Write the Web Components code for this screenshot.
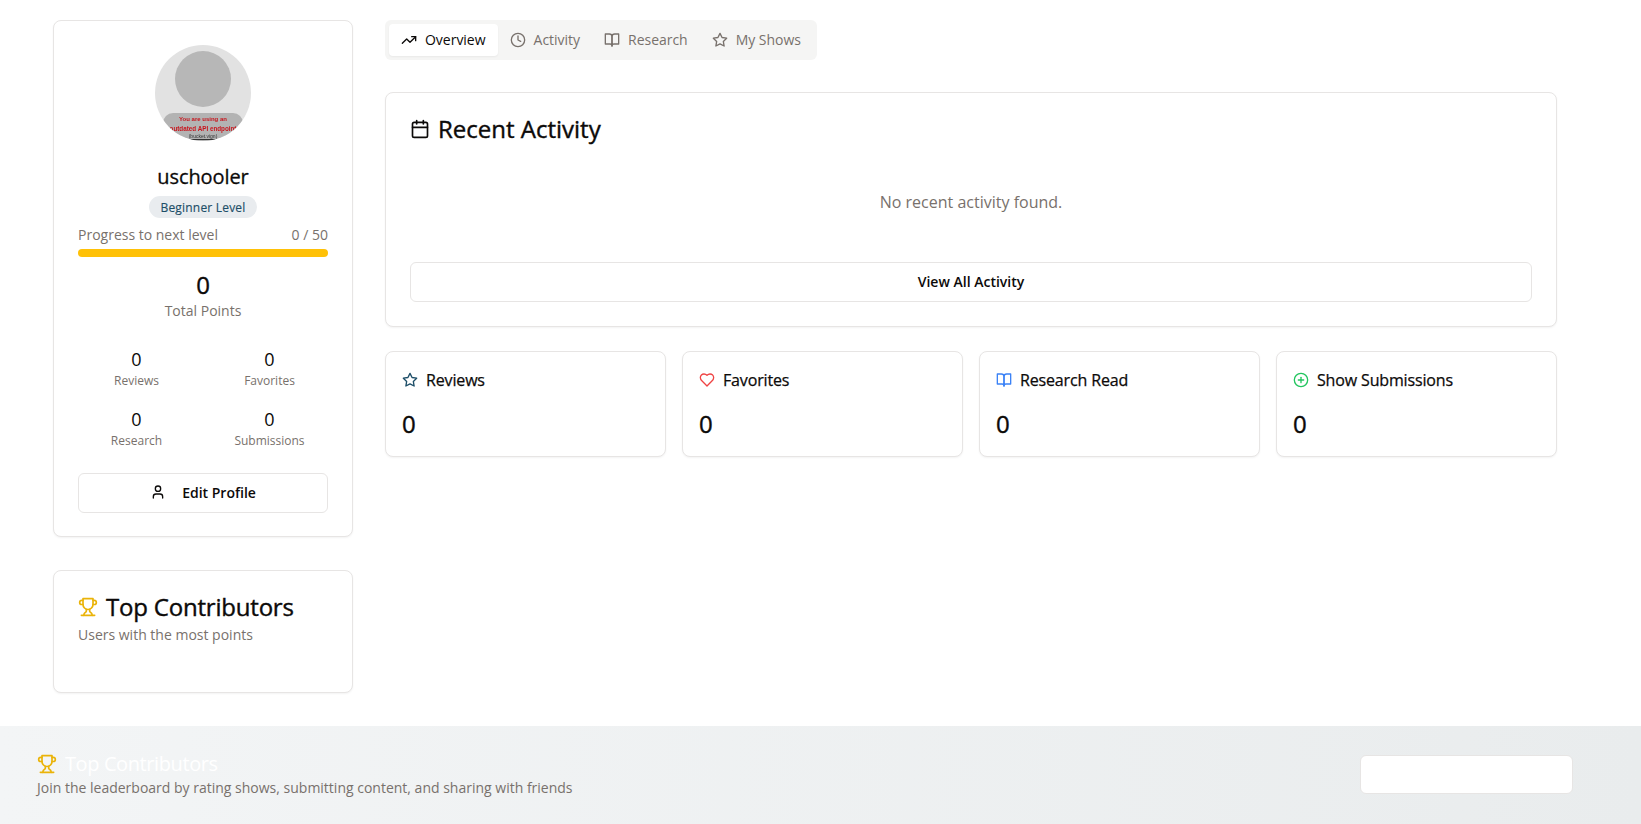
<!DOCTYPE html>
<html lang="en">
<head>
<meta charset="utf-8">
<title>Profile</title>
<style>
  html, body { margin: 0; padding: 0; background: #fff; }
  body { font-family: "Open Sans", "Noto Sans", sans-serif; color: #0c0a09; }
</style>
</head>
<body>
<profile-page></profile-page>

<script>
const ICONS = {
  trending: '<polyline points="22 7 13.5 15.5 8.5 10.5 2 17"/><polyline points="16 7 22 7 22 13"/>',
  clock: '<circle cx="12" cy="12" r="10"/><polyline points="12 6 12 12 16 14"/>',
  book: '<path d="M2 3h6a4 4 0 0 1 4 4v14a3 3 0 0 0-3-3H2z"/><path d="M22 3h-6a4 4 0 0 0-4 4v14a3 3 0 0 1 3-3h7z"/>',
  star: '<polygon points="12 2 15.09 8.26 22 9.27 17 14.14 18.18 21.02 12 17.77 5.82 21.02 7 14.14 2 9.27 8.91 8.26 12 2"/>',
  calendar: '<path d="M8 2v4"/><path d="M16 2v4"/><rect width="18" height="18" x="3" y="4" rx="2"/><path d="M3 10h18"/>',
  heart: '<path d="M19 14c1.49-1.46 3-3.21 3-5.5A5.5 5.5 0 0 0 16.5 3c-1.76 0-3 .5-4.5 2-1.5-1.5-2.74-2-4.5-2A5.5 5.5 0 0 0 2 8.5c0 2.3 1.5 4.05 3 5.5l7 7Z"/>',
  plus: '<circle cx="12" cy="12" r="10"/><path d="M8 12h8"/><path d="M12 8v8"/>',
  trophy: '<path d="M6 9H4.5a2.5 2.5 0 0 1 0-5H6"/><path d="M18 9h1.5a2.5 2.5 0 0 0 0-5H18"/><path d="M4 22h16"/><path d="M10 14.66V17c0 .55-.47.98-.97 1.21C7.85 18.75 7 20.24 7 22"/><path d="M14 14.66V17c0 .55.47.98.97 1.21C16.15 18.75 17 20.24 17 22"/><path d="M18 2H6v7a6 6 0 0 0 12 0V2Z"/>',
  user: '<path d="M19 21v-2a4 4 0 0 0-4-4H9a4 4 0 0 0-4 4v2"/><circle cx="12" cy="7" r="4"/>'
};

class AppIcon extends HTMLElement {
  connectedCallback() {
    const size = this.getAttribute('size') || 16;
    this.attachShadow({ mode: 'open' });
    this.shadowRoot.innerHTML = `
      <style>
        :host { display: inline-flex; flex: none; color: inherit; -webkit-text-stroke: 0; }
        svg { display: block; }
      </style>
      <svg width="${size}" height="${size}" viewBox="0 0 24 24" fill="none" stroke="currentColor"
        stroke-width="2" stroke-linecap="round" stroke-linejoin="round">${ICONS[this.getAttribute('name')]}</svg>
    `;
  }
}
customElements.define('app-icon', AppIcon);

class AppCard extends HTMLElement {
  connectedCallback() {
    this.attachShadow({ mode: 'open' });
    this.shadowRoot.innerHTML = `
      <style>
        :host {
          display: block;
          box-sizing: border-box;
          background: #fff;
          border: 1px solid #e7e5e4;
          border-radius: 8px;
          box-shadow: 0 1px 2px rgba(0, 0, 0, 0.05);
        }
      </style>
      <slot></slot>
    `;
  }
}
customElements.define('app-card', AppCard);

class OutlineButton extends HTMLElement {
  connectedCallback() {
    this.attachShadow({ mode: 'open' });
    this.shadowRoot.innerHTML = `
      <style>
        :host {
          display: flex;
          align-items: center;
          justify-content: center;
          box-sizing: border-box;
          height: 40px;
          padding-bottom: 2px;
          background: #fff;
          border: 1px solid #e7e5e4;
          border-radius: 6px;
          font-size: 14px;
          font-weight: 600;
          color: #0c0a09;
        }
      </style>
      <slot></slot>
    `;
  }
}
customElements.define('outline-button', OutlineButton);

class UserAvatar extends HTMLElement {
  connectedCallback() {
    this.attachShadow({ mode: 'open' });
    this.shadowRoot.innerHTML = `
      <style>
        :host {
          display: block;
          position: relative;
          width: 96px;
          height: 96px;
          border-radius: 50%;
          overflow: hidden;
          background: #e2e2e2;
        }
        .head {
          position: absolute;
          left: 20px;
          top: 6px;
          width: 56px;
          height: 56px;
          border-radius: 50%;
          background: #b7b7b7;
        }
        .plate {
          position: absolute;
          left: 8px;
          top: 68px;
          width: 80px;
          height: 40px;
          border-radius: 10px;
          background: #b3b3b3;
          font-family: "Liberation Sans", sans-serif;
          text-align: center;
          white-space: nowrap;
          overflow: hidden;
        }
        .warn {
          margin-top: 2px;
          font-size: 6px;
          line-height: 9px;
          font-weight: 700;
          color: #c8141c;
          filter: blur(0.25px);
        }
        .warn.long { margin-top: 0; font-size: 6.3px; }
        .src {
          font-size: 5px;
          line-height: 7px;
          color: #333;
          text-decoration: underline;
          filter: blur(0.25px);
        }
      </style>
      <div class="head"></div>
      <div class="plate">
        <div class="warn">You are using an</div>
        <div class="warn long">outdated API endpoint</div>
        <div class="src">(bucket.vign)</div>
      </div>
    `;
  }
}
customElements.define('user-avatar', UserAvatar);

class MiniStat extends HTMLElement {
  connectedCallback() {
    this.attachShadow({ mode: 'open' });
    this.shadowRoot.innerHTML = `
      <style>
        :host { display: block; text-align: center; }
        .num { font-size: 18px; line-height: 28px; }
        .lab { font-size: 12px; line-height: 16px; color: #78716c; }
      </style>
      <div class="num">${this.getAttribute('value')}</div>
      <div class="lab">${this.getAttribute('label')}</div>
    `;
  }
}
customElements.define('mini-stat', MiniStat);

class ProfileCard extends HTMLElement {
  connectedCallback() {
    this.attachShadow({ mode: 'open' });
    this.shadowRoot.innerHTML = `
      <style>
        :host { display: block; }
        app-card { height: 517px; padding: 24px; }
        .top { display: flex; flex-direction: column; align-items: center; }
        h2 {
          margin: 22px 0 0;
          font-size: 20px;
          line-height: 28px;
          font-weight: 400;
          letter-spacing: -0.1px;
          -webkit-text-stroke: 0.3px currentColor;
        }
        .badge {
          margin-top: 5px;
          height: 22px;
          box-sizing: border-box;
          padding: 0 11px;
          display: flex;
          align-items: center;
          border-radius: 11px;
          background: #e9ecef;
          font-size: 12px;
          letter-spacing: 0.2px;
          color: #1d4e68;
          -webkit-text-stroke: 0.15px currentColor;
        }
        .progress {
          display: flex;
          justify-content: space-between;
          margin-top: 7px;
          font-size: 14px;
          line-height: 20px;
          color: #78716c;
        }
        .bar { height: 8px; margin-top: 4px; border-radius: 4px; background: #ffc107; }
        .total { margin-top: 12px; text-align: center; }
        .total b {
          display: block;
          font-size: 24px;
          line-height: 32px;
          font-weight: 400;
          -webkit-text-stroke: 0.4px currentColor;
        }
        .total span { display: block; font-size: 14px; line-height: 20px; color: #78716c; }
        .grid {
          display: grid;
          grid-template-columns: 1fr 1fr;
          gap: 16px;
          margin-top: 24px;
        }
        outline-button { margin-top: 24px; gap: 16px; }
      </style>
      <app-card>
        <div class="top">
          <user-avatar></user-avatar>
          <h2>uschooler</h2>
          <div class="badge">Beginner Level</div>
        </div>
        <div class="progress"><span>Progress to next level</span><span>0 / 50</span></div>
        <div class="bar"></div>
        <div class="total"><b>0</b><span>Total Points</span></div>
        <div class="grid">
          <mini-stat value="0" label="Reviews"></mini-stat>
          <mini-stat value="0" label="Favorites"></mini-stat>
          <mini-stat value="0" label="Research"></mini-stat>
          <mini-stat value="0" label="Submissions"></mini-stat>
        </div>
        <outline-button><app-icon name="user"></app-icon>Edit Profile</outline-button>
      </app-card>
    `;
  }
}
customElements.define('profile-card', ProfileCard);

class ContributorsCard extends HTMLElement {
  connectedCallback() {
    this.attachShadow({ mode: 'open' });
    this.shadowRoot.innerHTML = `
      <style>
        :host { display: block; }
        app-card { height: 123px; padding: 24px; }
        h2 {
          display: flex;
          align-items: center;
          gap: 8px;
          margin: 0;
          font-size: 24px;
          line-height: 24px;
          font-weight: 400;
          letter-spacing: -0.2px;
          -webkit-text-stroke: 0.4px currentColor;
        }
        app-icon { color: #eab308; }
        p { margin: 6px 0 0; font-size: 14px; line-height: 20px; color: #78716c; }
      </style>
      <app-card>
        <h2><app-icon name="trophy" size="20"></app-icon>Top Contributors</h2>
        <p>Users with the most points</p>
      </app-card>
    `;
  }
}
customElements.define('contributors-card', ContributorsCard);

class TabBar extends HTMLElement {
  connectedCallback() {
    this.attachShadow({ mode: 'open' });
    const tabs = [['trending', 'Overview'], ['clock', 'Activity'], ['book', 'Research'], ['star', 'My Shows']];
    this.shadowRoot.innerHTML = `
      <style>
        :host {
          display: inline-flex;
          box-sizing: border-box;
          height: 40px;
          padding: 4px;
          background: #f5f5f4;
          border-radius: 6px;
          font-size: 14px;
          letter-spacing: -0.02px;
          color: #78716c;
        }
        .tab {
          display: flex;
          align-items: center;
          gap: 8px;
          padding: 0 12px 1px;
          border-radius: 4px;
        }
        .tab.on {
          background: #fff;
          color: #0c0a09;
          box-shadow: 0 1px 2px rgba(0, 0, 0, 0.05);
        }
      </style>
      ${tabs.map((t, i) => `
        <div class="tab ${i === 0 ? 'on' : ''}"><app-icon name="${t[0]}"></app-icon>${t[1]}</div>
      `).join('')}
    `;
  }
}
customElements.define('tab-bar', TabBar);

class RecentActivity extends HTMLElement {
  connectedCallback() {
    this.attachShadow({ mode: 'open' });
    this.shadowRoot.innerHTML = `
      <style>
        :host { display: block; }
        app-card { height: 235px; padding: 24px; }
        h2 {
          display: flex;
          align-items: center;
          gap: 8px;
          margin: 0;
          font-size: 24px;
          line-height: 24px;
          font-weight: 400;
          -webkit-text-stroke: 0.4px currentColor;
        }
        p {
          margin: 0;
          height: 121px;
          padding-top: 49px;
          box-sizing: border-box;
          text-align: center;
          font-size: 16px;
          line-height: 24px;
          color: #78716c;
        }
      </style>
      <app-card>
        <h2><app-icon name="calendar" size="20"></app-icon>Recent Activity</h2>
        <p>No recent activity found.</p>
        <outline-button>View All Activity</outline-button>
      </app-card>
    `;
  }
}
customElements.define('recent-activity', RecentActivity);

class StatTile extends HTMLElement {
  connectedCallback() {
    this.attachShadow({ mode: 'open' });
    this.shadowRoot.innerHTML = `
      <style>
        :host { display: block; }
        app-card { height: 106px; padding: 16px; }
        .head {
          display: flex;
          align-items: center;
          gap: 8px;
          height: 24px;
          font-size: 16px;
          letter-spacing: -0.15px;
          -webkit-text-stroke: 0.25px currentColor;
        }
        app-icon { color: ${this.getAttribute('color')}; }
        .val {
          margin-top: 16px;
          font-size: 24px;
          line-height: 32px;
          -webkit-text-stroke: 0.4px currentColor;
        }
      </style>
      <app-card>
        <div class="head"><app-icon name="${this.getAttribute('icon')}"></app-icon>${this.getAttribute('label')}</div>
        <div class="val">${this.getAttribute('value')}</div>
      </app-card>
    `;
  }
}
customElements.define('stat-tile', StatTile);

class LeaderboardBanner extends HTMLElement {
  connectedCallback() {
    this.attachShadow({ mode: 'open' });
    this.shadowRoot.innerHTML = `
      <style>
        :host {
          display: flex;
          align-items: center;
          justify-content: space-between;
          box-sizing: border-box;
          height: 98px;
          padding: 0 68px 2px 37px;
          background: linear-gradient(90deg, #f3f5f6, #e9eced);
        }
        h3 {
          display: flex;
          align-items: center;
          gap: 8px;
          margin: 0;
          font-size: 20px;
          line-height: 28px;
          font-weight: 400;
          letter-spacing: -0.4px;
          color: #fff;
        }
        app-icon { color: #eab308; }
        p { margin: 0; font-size: 14px; line-height: 20px; color: #78716c; }
        .blank {
          width: 213px;
          height: 39px;
          box-sizing: border-box;
          background: #fff;
          border: 1px solid #e7e5e4;
          border-radius: 6px;
        }
      </style>
      <div>
        <h3><app-icon name="trophy" size="20"></app-icon>Top Contributors</h3>
        <p>Join the leaderboard by rating shows, submitting content, and sharing with friends</p>
      </div>
      <div class="blank"></div>
    `;
  }
}
customElements.define('leaderboard-banner', LeaderboardBanner);

class ProfilePage extends HTMLElement {
  connectedCallback() {
    this.attachShadow({ mode: 'open' });
    this.shadowRoot.innerHTML = `
      <style>
        :host { display: block; }
        main {
          display: grid;
          grid-template-columns: 300px 1172px;
          column-gap: 32px;
          height: 726px;
          box-sizing: border-box;
          padding: 20px 0 0 53px;
        }
        aside { display: flex; flex-direction: column; gap: 33px; }
        .col { display: flex; flex-direction: column; align-items: stretch; }
        tab-bar { align-self: flex-start; }
        recent-activity { margin-top: 32px; }
        .tiles {
          display: grid;
          grid-template-columns: repeat(4, 1fr);
          gap: 16px;
          margin-top: 24px;
        }
      </style>
      <main>
        <aside>
          <profile-card></profile-card>
          <contributors-card></contributors-card>
        </aside>
        <div class="col">
          <tab-bar></tab-bar>
          <recent-activity></recent-activity>
          <div class="tiles">
            <stat-tile icon="star" color="#1d4e68" label="Reviews" value="0"></stat-tile>
            <stat-tile icon="heart" color="#ef4444" label="Favorites" value="0"></stat-tile>
            <stat-tile icon="book" color="#3b82f6" label="Research Read" value="0"></stat-tile>
            <stat-tile icon="plus" color="#22c55e" label="Show Submissions" value="0"></stat-tile>
          </div>
        </div>
      </main>
      <leaderboard-banner></leaderboard-banner>
    `;
  }
}
customElements.define('profile-page', ProfilePage);
</script>
</body>
</html>
